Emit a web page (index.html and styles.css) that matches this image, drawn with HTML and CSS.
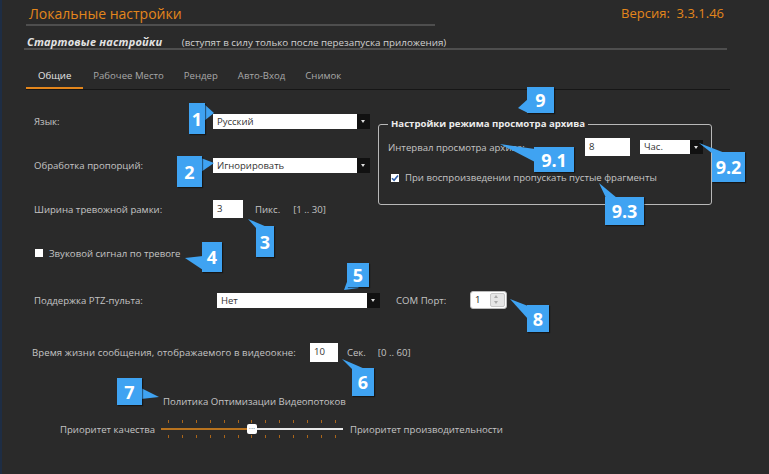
FILE: index.html
```html
<!DOCTYPE html>
<html lang="ru">
<head>
  <meta charset="UTF-8" />
  <meta name="viewport" content="width=device-width, initial-scale=1.0"/>
  <title>Локальные настройки</title>
  <link rel="stylesheet" href="styles.css">
</head>
<body>
  <div class="page">
    <header class="head">
      <h1>Локальные настройки</h1>
      <span class="version">Версия:&nbsp; 3.3.1.46</span>
    </header>

    <div class="sub">
      <span class="sub-title">Стартовые настройки</span>
      <span class="sub-note">(вступят в силу только после перезапуска приложения)</span>
    </div>

    <nav class="tabs">
      <span class="tab active">Общие</span>
      <span class="tab">Рабочее Место</span>
      <span class="tab">Рендер</span>
      <span class="tab">Авто-Вход</span>
      <span class="tab">Снимок</span>
    </nav>

    <div class="top">
      <div class="rows">
        <div class="row">
          <span class="label">Язык:</span>
          <div class="select w-lang"><span class="value">Русский</span><span class="arrow"></span></div>
        </div>
        <div class="row">
          <span class="label">Обработка пропорций:</span>
          <div class="select w-lang"><span class="value">Игнорировать</span><span class="arrow"></span></div>
        </div>
        <div class="row">
          <span class="label">Ширина тревожной рамки:</span>
          <span class="input w-frame">3</span>
          <span class="unit">Пикс.</span>
          <span class="range">[1 .. 30]</span>
        </div>
      </div>

      <fieldset class="archive">
        <legend>Настройки режима просмотра архива</legend>
        <div class="arch-row">
          <span class="arch-label">Интервал просмотра архива:</span>
          <span class="input w-interval">8</span>
          <div class="select w-hours"><span class="value">Час.</span><span class="arrow"></span></div>
        </div>
        <label class="check-row">
          <span class="box checked">
            <svg width="8" height="8" viewBox="0 0 8 8"><path d="M1 4.2 L3.1 6.3 L7 1.6" fill="none" stroke="#2f5fa8" stroke-width="1.6"/></svg>
          </span>
          При воспроизведении пропускать пустые фрагменты
        </label>
      </fieldset>
    </div>

    <div class="row row-sound">
      <label class="check-row"><span class="box"></span>Звуковой сигнал по тревоге</label>
    </div>

    <div class="row row-ptz">
      <span class="label label-ptz">Поддержка PTZ-пульта:</span>
      <div class="select w-ptz"><span class="value">Нет</span><span class="arrow"></span></div>
      <span class="com-label">COM Порт:</span>
      <div class="spin">
        <span class="spin-value">1</span>
        <span class="spin-btns"><span class="spin-up"></span><span class="spin-down"></span></span>
      </div>
    </div>

    <div class="row row-time">
      <span class="label label-time">Время жизни сообщения, отображаемого в видеоокне:</span>
      <span class="input w-time">10</span>
      <span class="unit">Сек.</span>
      <span class="range">[0 .. 60]</span>
    </div>

    <div class="policy">Политика Оптимизации Видеопотоков</div>

    <div class="slider-row">
      <span class="slider-end first">Приоритет качества</span>
      <div class="slider">
        <div class="ticks">
          <i></i><i></i><i></i><i></i><i></i><i></i><i></i><i></i><i></i><i></i><i></i><i></i><i></i>
        </div>
        <div class="track"><span class="track-fill"></span><span class="thumb">···</span></div>
        <div class="ticks">
          <i></i><i></i><i></i><i></i><i></i><i></i><i></i><i></i><i></i><i></i><i></i><i></i><i></i>
        </div>
      </div>
      <span class="slider-end">Приоритет производительности</span>
    </div>
  </div>

  <!-- выноски -->
  <svg class="tails" width="769" height="474" viewBox="0 0 769 474">
    <polygon points="202,104 212,113 202,121"/>
    <polygon points="199,158 212,163 199,172"/>
    <polygon points="254,228 246,219 265,227"/>
    <polygon points="201,256 183,258 201,270"/>
    <polygon points="346,279 342,290 357,288"/>
    <polygon points="351,370 340,359 363,369"/>
    <polygon points="139,388 157,397 139,399"/>
    <polygon points="526,306 508,299 526,319"/>
    <polygon points="526,99 516,108 526,113"/>
    <polygon points="533,149 498,144 533,162"/>
    <polygon points="711,154 697,143 723,153"/>
    <polygon points="604,198 597,183 615,198"/>
  </svg>
  <span class="callout c1">1</span>
  <span class="callout c2">2</span>
  <span class="callout c3">3</span>
  <span class="callout c4">4</span>
  <span class="callout c5">5</span>
  <span class="callout c6">6</span>
  <span class="callout c7">7</span>
  <span class="callout c8">8</span>
  <span class="callout c9">9</span>
  <span class="callout c91">9.1</span>
  <span class="callout c92">9.2</span>
  <span class="callout c93">9.3</span>
</body>
</html>
```

FILE: styles.css
```css
:root {
  --bg: #2a2a2a;
  --text: #c4c4c4;
  --orange: #e3861c;
  --callout: #3fa3f2;
}
html, body {
  margin: 0;
  padding: 0;
  height: 100%;
}
body {
  background: var(--bg);
  color: var(--text);
  font-family: 'Open Sans', 'Noto Sans', sans-serif;
  font-size: 9.6px;
  border-left: 2px solid #1e2d44;
  box-sizing: border-box;
  position: relative;
  overflow: hidden;
}
.page {
  margin-left: 24px;
  width: 704px;
}

/* заголовок */
.head {
  display: flex;
  justify-content: space-between;
  align-items: flex-end;
  padding-top: 4px;
}
h1 {
  margin: 0;
  width: 409px;
  font-size: 14px;
  font-weight: 400;
  line-height: 20px;
  padding-left: 3px;
  color: var(--orange);
  border-bottom: 2px solid #4e4e4e;
  box-sizing: border-box;
}
.version {
  color: var(--orange);
  font-size: 13px;
  line-height: 16px;
  padding-right: 6px;
  margin-bottom: 5px;
}
.sub {
  width: 700px;
  margin-left: -2px;
  padding-top: 9px;
  padding-left: 3px;
  height: 13px;
  line-height: 13px;
  border-bottom: 2px solid #4e4e4e;
}
.sub-title {
  color: #e2e2e2;
  font-style: italic;
  font-weight: 700;
  font-size: 11px;
  letter-spacing: 0.2px;
}
.sub-note {
  margin-left: 17px;
  font-size: 9.8px;
  color: #d0d0d0;
}

/* вкладки */
.tabs {
  display: flex;
  margin-top: 19px;
  border-bottom: 1px solid #161616;
}
.tab {
  padding: 0 10px 4px;
  line-height: 14px;
  color: #a8a8a8;
  border-bottom: 2px solid transparent;
}
.tab.active {
  color: #e6e6e6;
  padding: 0 12px 4px;
  border-bottom-color: var(--orange);
}

/* строки */
.top {
  display: flex;
  margin-top: 9px;
}
.rows {
  width: 352px;
}
.row {
  height: 44px;
  display: flex;
  align-items: center;
  padding-left: 8px;
}
.label {
  width: 179px;
  flex: none;
}
.label-ptz {
  width: 183px;
}
.label-time {
  width: auto;
  margin-right: 14px;
  margin-left: -2px;
  letter-spacing: 0.08px;
}
.select {
  display: flex;
  height: 15px;
  flex: none;
}
.select .value {
  flex: 1;
  background: #fff;
  color: #333;
  font-size: 9.5px;
  line-height: 15px;
  padding-left: 4px;
}
.select .arrow {
  width: 13px;
  background: #111;
  position: relative;
}
.select .arrow::after {
  content: "";
  position: absolute;
  left: 4px;
  top: 6px;
  border-left: 2.5px solid transparent;
  border-right: 2.5px solid transparent;
  border-top: 3px solid #ddd;
}
.w-lang { width: 157px; }
.w-ptz { width: 163px; }
.w-hours { width: 63px; height: 14px; }
.w-hours .value { line-height: 14px; }
.input {
  display: inline-block;
  background: #fff;
  color: #333;
  height: 18px;
  line-height: 18px;
  padding-left: 4px;
  box-sizing: border-box;
  flex: none;
}
.w-frame { width: 30px; }
.w-time { width: 28px; height: 19px; }
.w-interval { width: 45px; }
.unit {
  margin-left: 12px;
}
.range {
  margin-left: 13px;
}
.row-time .unit { margin-left: 9px; }
.row-time .range { margin-left: 12px; }

/* архив */
.archive {
  margin: 19px 0 0 0;
  padding: 0 0 0 9px;
  width: 334px;
  height: 87px;
  box-sizing: border-box;
  border: 1px solid #b8b8b8;
  border-radius: 3px;
}
.archive legend {
  color: #ececec;
  font-weight: 700;
  padding: 0 3px;
  margin-left: 0;
  line-height: 12px;
}
.arch-row {
  display: flex;
  align-items: center;
  margin-top: 8px;
}
.arch-label {
  width: 197px;
}
.w-hours {
  margin-left: 10px;
}
.check-row {
  display: flex;
  align-items: center;
  gap: 6px;
}
.archive .check-row {
  margin-top: 15px;
  margin-left: 3px;
}
.box {
  width: 8px;
  height: 8px;
  background: #fff;
  display: inline-flex;
  align-items: center;
  justify-content: center;
}
.row-sound {
  height: 44px;
  padding-left: 9px;
}
.row-ptz {
  margin-top: 2px;
  height: 46px;
}
.com-label {
  margin-left: 16px;
  width: 74px;
}
.spin {
  width: 37px;
  height: 18px;
  background: #fff;
  border-radius: 3px;
  display: flex;
  color: #222;
  box-sizing: border-box;
  border: 1px solid #bbb;
}
.spin-value {
  flex: 1;
  line-height: 16px;
  padding-left: 4px;
}
.spin-btns {
  width: 13px;
  display: flex;
  flex-direction: column;
  margin: 1px;
  background: #e6e6e6;
  border: 1px solid #c8c8c8;
  border-radius: 2px;
}
.spin-up, .spin-down {
  flex: 1;
  position: relative;
}
.spin-up::after, .spin-down::after {
  content: "";
  position: absolute;
  left: 3px;
  top: 1px;
  border-left: 2.5px solid transparent;
  border-right: 2.5px solid transparent;
}
.spin-up::after { border-bottom: 3px solid #aaa; }
.spin-down::after { border-top: 3px solid #aaa; }
.row-time {
  margin-top: 7px;
  height: 44px;
}
.policy {
  margin-top: 20px;
  margin-left: 137px;
  line-height: 16px;
}

/* ползунок */
.slider-row {
  display: flex;
  align-items: center;
  margin-top: 10px;
  padding-left: 34px;
}
.slider-end.first {
  width: 101px;
  flex: none;
}
.slider {
  width: 182px;
  margin-right: 7px;
}
.ticks {
  display: flex;
  justify-content: space-between;
  padding: 0 7px;
  height: 3px;
}
.ticks i {
  width: 1px;
  background: #a9651a;
}
.track {
  height: 2px;
  margin: 5px 0 5px;
  background: #e8e8e8;
  position: relative;
}
.track-fill {
  position: absolute;
  left: 0;
  top: 0;
  bottom: 0;
  width: 88px;
  background: #b8731f;
}
.thumb {
  position: absolute;
  left: 86px;
  top: -4px;
  width: 10px;
  height: 10px;
  background: #fff;
  border-radius: 2px;
  color: #456;
  font-size: 8px;
  line-height: 8px;
  text-align: center;
}

/* выноски */
.tails {
  position: absolute;
  left: 0;
  top: 0;
  pointer-events: none;
}
.tails polygon {
  fill: var(--callout);
}
.callout {
  position: absolute;
  background: var(--callout);
  color: #fff;
  font-family: 'Open Sans', 'Noto Sans', sans-serif;
  font-weight: 700;
  font-size: 18px;
  display: flex;
  align-items: center;
  justify-content: center;
  box-shadow: 1px 1px 1px rgba(0,0,0,0.45);
}
.c1 { left: 187px; top: 103px; width: 16px; height: 31px; }
.c2 { left: 175px; top: 156px; width: 25px; height: 31px; }
.c3 { left: 254px; top: 226px; width: 18px; height: 31px; }
.c4 { left: 200px; top: 242px; width: 20px; height: 30px; }
.c5 { left: 345px; top: 263px; width: 22px; height: 24px; }
.c6 { left: 350px; top: 368px; width: 22px; height: 28px; }
.c7 { left: 115px; top: 378px; width: 25px; height: 27px; }
.c8 { left: 525px; top: 305px; width: 22px; height: 27px; }
.c9 { left: 525px; top: 87px; width: 27px; height: 26px; }
.c91 { left: 532px; top: 147px; width: 40px; height: 25px; }
.c92 { left: 710px; top: 152px; width: 33px; height: 30px; }
.c93 { left: 603px; top: 197px; width: 39px; height: 28px; }
```
